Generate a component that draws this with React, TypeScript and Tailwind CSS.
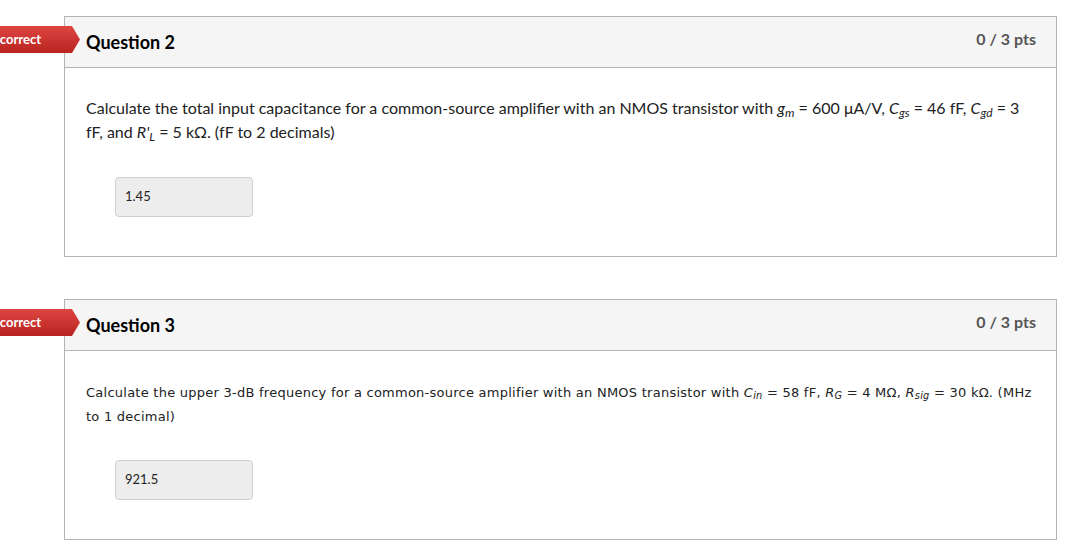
import type { ReactNode } from "react";

type QuestionProps = {
  title: string;
  points: string;
  answer: string;
  children: ReactNode;
  verdana?: boolean;
};

function Ribbon() {
  return (
    <div className="absolute left-[-101px] top-[9px] flex h-[27px] w-[116px] items-center justify-end bg-linear-to-b from-[#de4542] to-[#b8221f] pr-[39px] text-[13px] font-bold text-white [clip-path:polygon(0_0,calc(100%-8px)_0,100%_50%,calc(100%-8px)_100%,0_100%)] [font-family:Lato,sans-serif]">
      Incorrect
    </div>
  );
}

function Question({ title, points, answer, children, verdana }: QuestionProps) {
  return (
    <div className="relative w-[993px] border border-[#b4b4b4] bg-white">
      <Ribbon />
      <div className="flex h-[51px] items-center justify-between border-b border-[#b4b4b4] bg-[#f5f5f5] pl-[21px] pr-[20px] [font-family:Lato,sans-serif]">
        <h2 className="pt-[1px] text-[18px] font-bold text-[#000]">{title}</h2>
        <span className="mb-[6px] text-[16px] font-bold text-[#555]">{points}</span>
      </div>
      <div className={verdana ? "pb-[39px] pl-[21px] pr-[14px] pt-[30px]" : "pb-[39px] pl-[21px] pr-[24px] pt-[28px]"}>
        <div
          className={
            verdana
              ? "text-[13px] leading-[24px] tracking-[0.25px] text-[#222] [font-family:'DejaVu_Sans',Verdana,sans-serif]"
              : "text-[16px] leading-[24px] text-[#222] [font-family:Lato,sans-serif]"
          }
        >
          {children}
        </div>
        <div
          className={
            (verdana ? "mt-[31px] " : "mt-[33px] ") +
            "ml-[29px] flex h-[40px] w-[138px] items-center rounded-[4px] border border-[#cfcfcf] bg-[#ededed] pl-[9px] text-[13px] text-[#222] [font-family:Lato,sans-serif]"
          }
        >
          {answer}
        </div>
      </div>
    </div>
  );
}

function V({ b, s }: { b: string; s: string }) {
  return (
    <>
      <i>{b}</i>
      <sub className="text-[0.75em] italic leading-none">{s}</sub>
    </>
  );
}

export default function App() {
  return (
    <div className="min-h-screen bg-white pl-[64px] pt-[16px]">
      <div className="flex flex-col gap-[42px]">
        <Question title="Question 2" points="0 / 3 pts" answer="1.45">
          Calculate the total input capacitance for a common-source amplifier with an NMOS transistor with{" "}
          <V b="g" s="m" /> = 600 μA/V, <V b="C" s="gs" /> = 46 fF, <V b="C" s="gd" /> = 3 fF, and{" "}
          <V b="R'" s="L" /> = 5 kΩ. (fF to 2 decimals)
        </Question>
        <Question title="Question 3" points="0 / 3 pts" answer="921.5" verdana>
          Calculate the upper 3-dB frequency for a common-source amplifier with an NMOS transistor with{" "}
          <V b="C" s="in" /> = 58 fF, <V b="R" s="G" /> = 4 MΩ, <V b="R" s="sig" /> = 30 kΩ. (MHz to 1 decimal)
        </Question>
      </div>
    </div>
  );
}
